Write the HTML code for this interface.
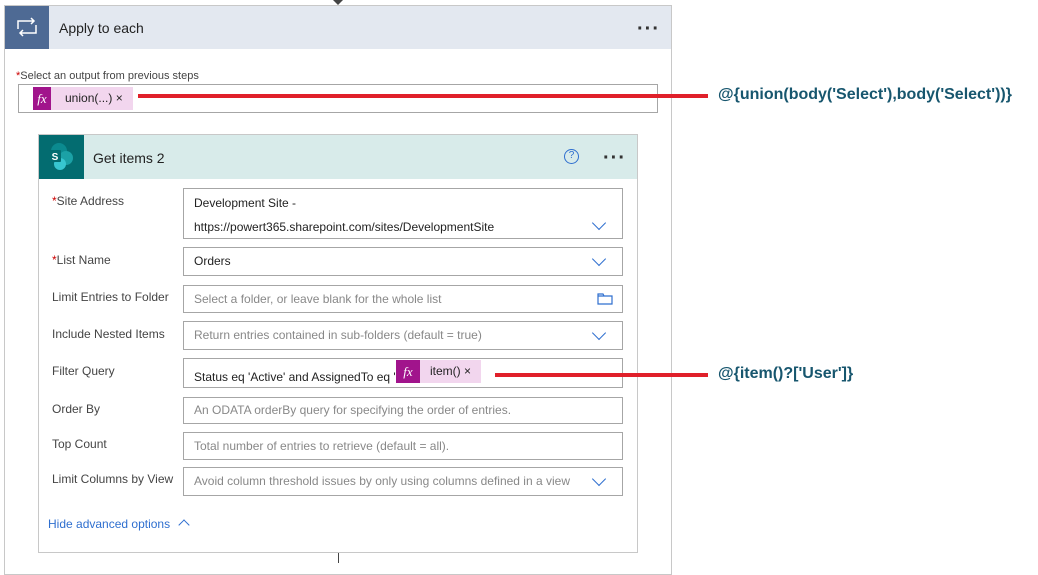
<!DOCTYPE html>
<html><head><style>
*{box-sizing:border-box;margin:0;padding:0}
body{width:1038px;height:562px;background:#fff;font-family:"Liberation Sans",sans-serif;position:relative;overflow:hidden;color:#222}
.a{position:absolute}
.lbl{position:absolute;left:52px;font-size:12px;color:#444}
.inp{position:absolute;left:183px;width:440px;border:1px solid #a6a6a6;font-size:12px;padding-left:10px;background:#fff}
.ph{color:#888}
.chev{position:absolute;right:18px;width:10px;height:10px;border-right:1.5px solid #2f6fcf;border-bottom:1.5px solid #2f6fcf;transform:rotate(45deg)}
.req{color:#c00}
.fx{position:absolute;background:#a1148c;color:#fff;font-family:"Liberation Serif",serif;font-style:italic;font-size:13px;text-align:center}
.tok{position:absolute;background:#f2d6ee;font-size:12px;color:#222}
.red{position:absolute;height:4px;background:#e0202a}
.ann{position:absolute;left:718px;font-size:16px;font-weight:bold;color:#17566e}
.dots{position:absolute;font-size:20px;font-weight:bold;letter-spacing:1px;color:#333}
</style></head><body>
<div class="a" style="left:333px;top:0;width:0;height:0;border-left:5px solid transparent;border-right:5px solid transparent;border-top:5px solid #444"></div>
<div class="a" style="left:4px;top:5px;width:668px;height:570px;border:1px solid #c8c8c8;background:#fff"></div>
<div class="a" style="left:5px;top:6px;width:666px;height:43px;background:#e3e8f0"></div>
<div class="a" style="left:5px;top:6px;width:44px;height:43px;background:#4e6a94"></div>
<svg class="a" style="left:16px;top:17px" width="22" height="20" viewBox="0 0 22 20" fill="none" stroke="#fff" stroke-width="1.5"><path d="M2 12V4h16M15 1l3 3-3 3M20 8v8H4M7 13l-3 3 3 3"/></svg>
<div class="a" style="left:59px;top:20px;font-size:14px;color:#222">Apply to each</div>
<div class="dots" style="left:637px;top:18px">···</div>
<div class="a" style="left:16px;top:70px;font-size:11px;color:#444"><span class="req">*</span>Select an output from previous steps</div>
<div class="a" style="left:18px;top:84px;width:640px;height:29px;border:1px solid #a6a6a6"></div>
<div class="fx" style="left:33px;top:87px;width:18px;height:23px;line-height:23px">fx</div>
<div class="tok" style="left:51px;top:87px;height:23px;line-height:23px;padding-left:14px;width:82px">union(...) ×</div>
<div class="red" style="left:138px;top:94px;width:570px"></div>
<div class="ann" style="top:86px">@{union(body('Select'),body('Select'))}</div>
<div class="a" style="left:38px;top:134px;width:600px;height:419px;border:1px solid #c8c8c8;background:#fff"></div>
<div class="a" style="left:39px;top:135px;width:598px;height:44px;background:#d8ebea"></div>
<div class="a" style="left:39px;top:135px;width:45px;height:44px;background:#036c70"></div>
<svg class="a" style="left:45px;top:141px" width="32" height="32" viewBox="0 0 32 32"><circle cx="14" cy="10" r="8" fill="#0b8a8f"/><circle cx="21" cy="17" r="7" fill="#1ba1a6"/><circle cx="15" cy="23" r="6" fill="#37c6d0"/><rect x="4" y="9" width="12" height="12" rx="1" fill="#036c70"/><text x="10" y="19" fill="#fff" font-size="10" font-weight="bold" text-anchor="middle" font-family="Liberation Sans">S</text></svg>
<div class="a" style="left:93px;top:150px;font-size:14px;color:#222">Get items 2</div>
<div class="a" style="left:564px;top:149px;width:15px;height:15px;border:1.5px solid #2f6fcf;border-radius:50%;font-size:10px;color:#2f6fcf;text-align:center;line-height:12px">?</div>
<div class="dots" style="left:603px;top:147px">···</div>

<div class="lbl" style="top:194px"><span class="req">*</span>Site Address</div>
<div class="inp" style="top:188px;height:51px;padding-top:2px;line-height:24px">Development Site -<br>https://powert365.sharepoint.com/sites/DevelopmentSite<div class="chev" style="top:29px"></div></div>
<div class="lbl" style="top:253px"><span class="req">*</span>List Name</div>
<div class="inp" style="top:247px;height:29px;line-height:27px">Orders<div class="chev" style="top:6px"></div></div>
<div class="lbl" style="top:290px">Limit Entries to Folder</div>
<div class="inp ph" style="top:285px;height:28px;line-height:26px">Select a folder, or leave blank for the whole list
<svg class="a" style="right:9px;top:6px" width="16" height="13" fill="none" stroke="#2f6fcf" stroke-width="1.2"><path d="M1 2h5l1 2h8v8H1z M1 4h6"/></svg></div>
<div class="lbl" style="top:327px">Include Nested Items</div>
<div class="inp ph" style="top:321px;height:29px;line-height:27px">Return entries contained in sub-folders (default = true)<div class="chev" style="top:6px"></div></div>
<div class="lbl" style="top:364px">Filter Query</div>
<div class="inp" style="top:358px;height:30px;line-height:36px">Status eq 'Active' and AssignedTo eq '</div>
<div class="fx" style="left:396px;top:360px;width:24px;height:23px;line-height:23px">fx</div>
<div class="tok" style="left:420px;top:360px;width:61px;height:23px;line-height:23px;padding-left:10px">item() ×</div>
<div class="red" style="left:495px;top:373px;width:213px"></div>
<div class="ann" style="top:365px">@{item()?['User']}</div>
<div class="lbl" style="top:402px">Order By</div>
<div class="inp ph" style="top:397px;height:27px;line-height:25px">An ODATA orderBy query for specifying the order of entries.</div>
<div class="lbl" style="top:437px">Top Count</div>
<div class="inp ph" style="top:432px;height:28px;line-height:26px">Total number of entries to retrieve (default = all).</div>
<div class="lbl" style="top:472px">Limit Columns by View</div>
<div class="inp ph" style="top:467px;height:29px;line-height:27px">Avoid column threshold issues by only using columns defined in a view<div class="chev" style="top:6px"></div></div>
<div class="a" style="left:48px;top:517px;font-size:12px;color:#2f6fcf">Hide advanced options</div>
<div class="a" style="left:180px;top:521px;width:8px;height:8px;border-left:1.3px solid #2f6fcf;border-top:1.3px solid #2f6fcf;transform:rotate(45deg)"></div>
<div class="a" style="left:338px;top:553px;width:1px;height:10px;background:#444"></div>
</body></html>
